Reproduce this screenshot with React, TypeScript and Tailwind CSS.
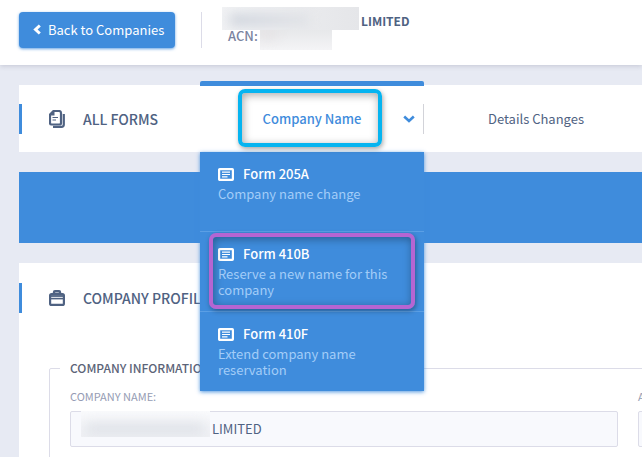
import React, { useState } from 'react';
import clsx from 'clsx';

interface CompanyForm {
    id: string;
    description: string;
    highlighted?: boolean;
}

const FORMS: CompanyForm[] = [
    { id: 'Form 205A', description: 'Company name change' },
    { id: 'Form 410B', description: 'Reserve a new name for this company', highlighted: true },
    { id: 'Form 410F', description: 'Extend company name reservation' },
];

const ChevronLeftIcon = () => (
    <svg width="8" height="12" viewBox="0 0 8 12" fill="none" stroke="currentColor" strokeWidth="3" aria-hidden="true">
        <path d="M6.8 1.5 2.5 5.5l4.3 4" />
    </svg>
);

const ChevronDownIcon = () => (
    <svg width="12" height="8" viewBox="0 0 12 8" fill="none" stroke="currentColor" strokeWidth="2.6" aria-hidden="true">
        <path d="M1.2 1.5 6 6l4.8-4.5" />
    </svg>
);

const CopyIcon = () => (
    <svg width="16" height="18" viewBox="0 0 16 18" fill="none" stroke="currentColor" aria-hidden="true">
        <path d="M4.5 1H10a2 2 0 0 1 2 2v10a1.5 1.5 0 0 1-1.5 1.5h-8A1.5 1.5 0 0 1 1 13V4.5z" strokeWidth="2.2" />
        <path d="M1 5.5V4.2L4.3 1h1.2v4.5z" fill="currentColor" stroke="none" />
        <path d="M3.5 7.5h5.5M3.5 10h3.5" strokeWidth="1.1" />
        <path d="M14.8 4v10.5a2.3 2.3 0 0 1-2.3 2.3H4" strokeWidth="2.2" />
    </svg>
);

const BriefcaseIcon = () => (
    <svg width="16" height="16" viewBox="0 0 16 16" fill="none" stroke="currentColor" aria-hidden="true">
        <rect x="1.1" y="4.1" width="13.8" height="10.8" rx="1.5" strokeWidth="2.2" />
        <path d="M5 4V2.2A1 1 0 0 1 6 1.2h4a1 1 0 0 1 1 1V4" strokeWidth="2.4" />
        <path d="M1 6h14" strokeWidth="1.8" />
        <path d="M1 8.6h14" strokeWidth="1.6" />
    </svg>
);

const ArticleIcon = () => (
    <svg width="16" height="13" viewBox="0 0 16 13" fill="none" stroke="currentColor" aria-hidden="true">
        <rect x="1.1" y="1.1" width="13.8" height="10.8" rx="0.6" strokeWidth="2.2" />
        <path d="M4 4.2h8M4 6.5h8M4 8.8h5.5" strokeWidth="1.2" />
    </svg>
);

const SectionTitle: React.FC<{ icon: React.ReactNode; children: React.ReactNode }> = ({ icon, children }) => (
    <div className="flex h-[30px] shrink-0 items-center border-l-3 border-[#3f8cdc] pl-[27px]">
        <span className="w-[34px]">{icon}</span>
        <h2 className="text-[14px] leading-5 font-medium whitespace-nowrap">{children}</h2>
    </div>
);

// Hidden part of a company's details
const Redacted: React.FC<{ className: string; smudge: string }> = ({ className, smudge }) => (
    <div className={clsx('overflow-hidden', className)} aria-hidden="true">
        <div className={clsx('blur-[6px]', smudge)}></div>
    </div>
);

const App: React.FC = () => {
    const [open, setOpen] = useState(true);

    return (
        <div className="flex h-screen flex-col overflow-hidden bg-[#e7eaf3] font-['Noto_Sans_CJK_SC',sans-serif] text-[#4f6282]">
            <header className="flex h-[65px] shrink-0 items-start bg-white pt-3 pl-[19px] shadow-[0_1px_5px_rgba(60,60,90,0.2)]">
                <button type="button" className="flex h-9 w-[156px] items-center rounded-[4px] bg-[#3f8cdc] pl-[14px] text-[13px] text-white shadow-[0_1px_3px_rgba(63,140,220,0.8)]">
                    <ChevronLeftIcon />
                    <span className="ml-[7px] whitespace-nowrap">Back to Companies</span>
                </button>
                <div className="ml-[26px] h-9 w-px bg-[#dcdce8]"></div>
                <div className="-mt-[5px] ml-5 text-[12px] leading-4 font-bold">
                    <div className="flex h-[23px] items-center">
                        <Redacted className="h-[23px] w-[137px] bg-linear-to-r from-[#f1f2f4] to-[#e5e6e9]" smudge="mt-2 ml-2 h-2.5 w-20 bg-linear-to-r from-[#c8ced8] to-[#e0e2e6]" />
                        <span className="mt-1 ml-0.5">LIMITED</span>
                    </div>
                    <div className="flex h-5 items-start pl-1.5 font-medium text-[#7b84a0]">
                        <span className="-mt-1.5 w-8 pt-1 text-[13px]">ACN:</span>
                        <Redacted className="h-5 w-[72px] bg-linear-to-b from-[#e7e8ea] to-[#f4f4f6]" smudge="h-2 w-4 bg-[#e3dfe1]" />
                    </div>
                </div>
            </header>

            <main className="flex flex-1 flex-col gap-5 pt-5 pl-[19px]">
                <section className="flex h-[67px] shrink-0 items-center bg-white">
                    <div className="w-[181px] shrink-0 pt-px">
                        <SectionTitle icon={<CopyIcon />}>ALL FORMS</SectionTitle>
                    </div>
                    <nav className="flex h-full text-[13px]">
                        <div className="relative flex w-[224px] shrink-0 items-center text-[#3f8cdc]">
                            <div className="absolute inset-x-0 -top-1 h-[5px] rounded-t-[2px] bg-[#3f8cdc]"></div>
                            <button
                                type="button"
                                aria-expanded={open}
                                onClick={() => setOpen(!open)}
                                className="flex h-full w-full items-center justify-center font-medium"
                            >
                                Company Name
                            </button>
                            <span className="pointer-events-none absolute right-[9px]"><ChevronDownIcon /></span>
                            <div className="absolute right-0 h-[30px] w-px bg-[#d2d3d9]"></div>
                            <div className="pointer-events-none absolute top-1 right-[42px] bottom-[5px] left-[38px] z-20 rounded-[7px] border-4 border-[#06b4f0] shadow-[1px_2px_5px_rgba(0,0,0,0.35),inset_1px_2px_8px_rgba(0,0,0,0.35)]"></div>

                            {open && (
                                <ul className="absolute inset-x-0 top-full z-10 bg-[#3f8cdc] shadow-[0_1px_4px_rgba(63,140,220,0.9)]">
                                    {FORMS.map((form) => (
                                        <li key={form.id} className="relative h-20 border-b border-[#5b9fe5] last:h-[79px] last:border-b-0">
                                            <a href="#" className="block pt-3 pr-4 pl-[18px]">
                                                <span className="flex items-center gap-[9px] leading-5 font-medium text-white">
                                                    <ArticleIcon />
                                                    {form.id}
                                                </span>
                                                <span className="mt-0.5 block leading-4 text-[#a3cdf8]">{form.description}</span>
                                            </a>
                                            {form.highlighted && (
                                                <div className="pointer-events-none absolute inset-x-[9px] top-px bottom-[2px] rounded-[7px] border-4 border-[#b565d2] shadow-[1px_2px_5px_rgba(0,0,0,0.35),inset_1px_2px_8px_rgba(0,0,0,0.35)]"></div>
                                            )}
                                        </li>
                                    ))}
                                </ul>
                            )}
                        </div>
                        <button type="button" className="w-[224px] shrink-0">Details Changes</button>
                    </nav>
                </section>

                <div className="h-[71px] shrink-0 bg-[#3f8cdc]"></div>

                <section className="flex-1 bg-white pt-5">
                    <SectionTitle icon={<BriefcaseIcon />}>COMPANY PROFILE</SectionTitle>
                    <fieldset className="mt-[46px] ml-[30px] w-[1178px] rounded-[2px] border border-[#dcdce8] px-5 pb-8">
                        <legend className="-ml-2.5 px-2.5 text-[12px] leading-[18px] font-medium text-[#5c6478]">COMPANY INFORMATION</legend>
                        <div className="grid grid-cols-[548px_548px] gap-5 pt-[11px]">
                            <div>
                                <label htmlFor="company-name" className="block text-[11px] leading-4 text-[#959cb4]">COMPANY NAME:</label>
                                <div className="relative mt-[7px]">
                                    <input
                                        id="company-name"
                                        defaultValue="LIMITED"
                                        readOnly
                                        className="h-9 w-full rounded-[2px] border border-[#dcdce8] bg-[#f8f9fd] pb-px pl-[141px] text-[13px]"
                                    />
                                    <Redacted className="absolute top-0 left-[11px] h-[26px] w-[129px] bg-linear-to-b from-[#f9fafc] to-[#f0f1f5]" smudge="mt-3 ml-1 h-3 w-[120px] bg-[#dfe2e8]" />
                                </div>
                            </div>
                            <div>
                                <label htmlFor="acn" className="block text-[11px] leading-4 text-[#959cb4]">ACN:</label>
                                <input id="acn" readOnly className="mt-[7px] h-9 w-full rounded-[2px] border border-[#dcdce8] bg-[#f8f9fd] px-3 text-[13px]" />
                            </div>
                        </div>
                    </fieldset>
                </section>
            </main>
        </div>
    );
};

export default App;
